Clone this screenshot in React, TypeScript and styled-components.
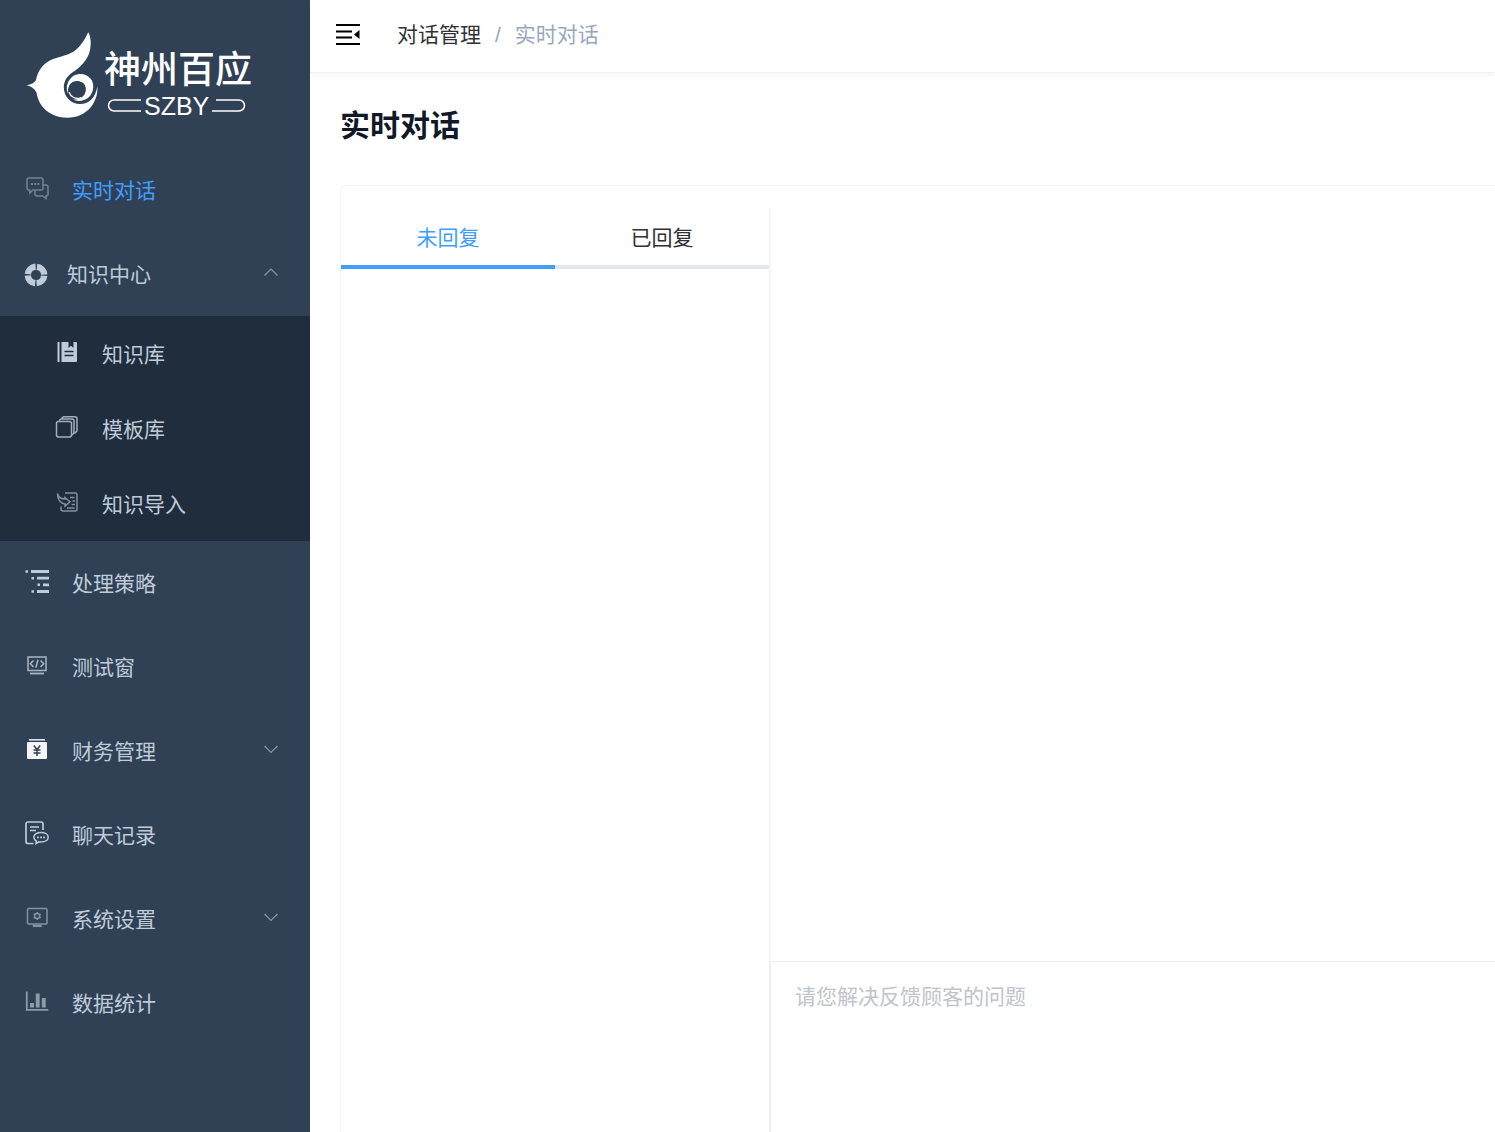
import React from "react";
import styled, { createGlobalStyle, css } from "styled-components";

const GlobalStyle = createGlobalStyle`
  *, *::before, *::after { box-sizing: border-box; }
  body {
    margin: 0;
    background: #fff;
    color: #303133;
    font-family: "Liberation Sans", "Noto Sans CJK SC", sans-serif;
    font-size: 21px;
    line-height: 30px;
  }
  button, textarea { font: inherit; }
`;

const Page = styled.div`
  display: flex;
  min-height: 100vh;
`;

const Sidebar = styled.aside`
  flex: 0 0 310px;
  background: #304156;
  color: #bfcbd9;
`;

const Brand = styled.a`
  display: flex;
  align-items: center;
  gap: 6px;
  height: 148px;
  padding: 0 26px;
  color: #fff;
  text-decoration: none;
`;

const BrandText = styled.span`
  display: flex;
  flex-direction: column;
  gap: 2px;
  padding-top: 20px;
`;

const BrandName = styled.span`
  font-size: 37px;
  font-weight: 500;
  line-height: 42px;
  white-space: nowrap;
`;

const BrandLatin = styled.span`
  display: flex;
  align-items: center;
  gap: 3px;
  padding-left: 3px;
  font-size: 25px;
  line-height: 24px;
`;

const Loop = styled.svg`
  width: 34px;
  height: 16px;
  flex: none;
`;

const MenuList = styled.ul`
  list-style: none;
  margin: 0;
  padding: 0;
`;

const SubMenuList = styled(MenuList)`
  background: #1f2d3d;
`;

const rowStyle = css`
  display: flex;
  align-items: center;
  width: 100%;
  border: 0;
  background: none;
  text-align: left;
  text-decoration: none;
  cursor: pointer;
`;

const MenuLink = styled.a<{ $active?: boolean }>`
  ${rowStyle}
  height: 84px;
  padding: 0 32px 0 25px;
  gap: 23px;
  color: ${(p) => (p.$active ? "#409eff" : "inherit")};
`;

const MenuToggle = styled.button<{ $tight?: boolean }>`
  ${rowStyle}
  height: 84px;
  padding: 0 32px 0 ${(p) => (p.$tight ? 24 : 25)}px;
  gap: ${(p) => (p.$tight ? 19 : 23)}px;
  color: inherit;
`;

const SubMenuLink = styled.a`
  ${rowStyle}
  height: 75px;
  padding: 1px 32px 0 55px;
  gap: 23px;
  color: inherit;
`;

const IconBox = styled.span<{ $color?: string; $level?: boolean }>`
  display: flex;
  flex: none;
  padding: ${(p) => (p.$level ? "2px 0 0" : "0 0 4px")};
  color: ${(p) => p.$color ?? "#bfcbd9"};
`;

const Label = styled.span`
  flex: 1;
  padding-top: 2px;
`;

const Chevron = styled.svg`
  width: 14px;
  height: 14px;
  margin-bottom: 4px;
  color: #8d959f;
`;

const Content = styled.div`
  display: flex;
  flex: 1;
  flex-direction: column;
  min-width: 0;
`;

const TopBar = styled.header`
  display: flex;
  align-items: center;
  gap: 36px;
  height: 73px;
  padding: 0 25px 2px;
  border-bottom: 1px solid #f3f3f4;
  box-shadow: 0 1px 6px rgba(0, 21, 41, 0.06);
`;

const FoldButton = styled.button`
  display: flex;
  padding: 0;
  border: 0;
  background: none;
  color: #000;
  cursor: pointer;
`;

const Crumbs = styled.ol`
  display: flex;
  gap: 14px;
  margin: 0;
  padding: 0;
  list-style: none;
  color: #97a8be;

  a {
    color: #303133;
    text-decoration: none;
  }
`;

const Main = styled.main`
  display: flex;
  flex: 1;
  flex-direction: column;
  padding: 30px 0 0 30px;
`;

const Title = styled.h1`
  margin: 0 0 36px;
  color: #111827;
  font-size: 30px;
  font-weight: 700;
  line-height: 46px;
`;

const Panel = styled.section`
  display: flex;
  flex: 1;
  padding-top: 22px;
  border: solid #f2f3f5;
  border-width: 1px 0 0 1px;
  border-radius: 6px 0 0 0;
`;

const Threads = styled.div`
  flex: 0 0 428px;
`;

const TabBar = styled.div`
  display: flex;
`;

const Tab = styled.button<{ $active?: boolean }>`
  flex: 1;
  height: 61px;
  padding: 2px 0 0;
  border: 0;
  border-bottom: 4px solid ${(p) => (p.$active ? "#409eff" : "#e4e7ed")};
  background: none;
  color: ${(p) => (p.$active ? "#409eff" : "#303133")};
  cursor: pointer;
`;

const Conversation = styled.div`
  display: flex;
  flex: 1;
  flex-direction: column;
  min-width: 0;
`;

const Messages = styled.div`
  flex: 1;
  border-left: 2px solid #f5f5f6;
`;

const Reply = styled.textarea`
  display: block;
  width: 100%;
  height: 171px;
  padding: 20px 24px;
  border: solid #eceef1;
  border-width: 1px 0 0 2px;
  background: #fff;
  color: #303133;
  resize: none;
  outline: none;

  &::placeholder {
    color: #c0c4cc;
    opacity: 1;
  }
`;

type IconProps = { children: React.ReactNode };

const Icon = ({ children }: IconProps) => (
  <svg width="24" height="24" viewBox="0 0 24 24" fill="none" stroke="currentColor" strokeWidth="1.5" aria-hidden="true">
    {children}
  </svg>
);

const ChatIcon = () => (
  <Icon>
    <path d="M4 2h12a2 2 0 0 1 2 2v8a2 2 0 0 1-2 2H8l-3.200 3V14H4a2 2 0 0 1-2-2V4a2 2 0 0 1 2-2z" />
    <path d="M18 9h3a2 2 0 0 1 2 2v7a2 2 0 0 1-2 2v2.500L17.500 20H12a2 2 0 0 1-2-2v-4" />
    <path d="M6 8h2M9.200 8h2M12.400 8h2" strokeWidth="2" />
  </Icon>
);

const RingIcon = () => (
  <Icon>
    <circle cx="12" cy="12" r="8.200" strokeWidth="6.400" strokeDasharray="11.500 1.380" strokeDashoffset="-0.690" />
  </Icon>
);

const BookIcon = () => (
  <Icon>
    <path d="M2.500 2h2v20h-2zM6.500 2h7v6l2.500-2.200L18.500 8V2H21a1 1 0 0 1 1 1v18a1 1 0 0 1-1 1H6.500z" fill="currentColor" stroke="none" />
    <path d="M9.500 11.500h9M9.500 15.500h9" stroke="#1f2d3d" />
  </Icon>
);

const StackIcon = () => (
  <Icon>
    <rect x="1.500" y="6.500" width="15" height="15.500" rx="2" />
    <path d="M4 5.500 6 4h11a2 2 0 0 1 2 2v12l-2 2M6.500 3.500 8.500 1.800H20a2 2 0 0 1 2 2V16l-2.500 2.500" />
  </Icon>
);

const ImportIcon = () => (
  <Icon>
    <path d="M10 3h10a2 2 0 0 1 2 2v14a2 2 0 0 1-2 2H8a2 2 0 0 1-2-2v-2.500" />
    <path d="M2.500 3.500c.8 3.800 3.500 5.500 7.500 5.500V7.500l5 4.200-5 4.300v-2C5.500 13.500 2.500 9.500 2.500 3.500z" />
    <path d="M15 7.500h4.500M17.500 11h2.500M16.500 14.500H20M12 18h7.500" strokeWidth="1.400" />
  </Icon>
);

const TreeIcon = () => (
  <Icon>
    <path d="M6 2.500h18M12 9.200h12M18 15.800h6M12 22.500h12" strokeWidth="2.800" />
    <path d="M.5 2.500h2.500M6.500 9.200H9M12.500 15.800H15M6.500 22.500H9" strokeWidth="2.500" />
  </Icon>
);

const CodeIcon = () => (
  <Icon>
    <rect x="3" y="4" width="18" height="13.500" strokeWidth="1.500" />
    <path d="m8.500 7.500-3.200 3.200 3.200 3.200M15.500 7.500l3.200 3.200-3.200 3.200M13 6.800l-2.200 8" strokeWidth="1.500" />
    <path d="M5 20.500h14" strokeWidth="1.800" />
  </Icon>
);

const MoneyIcon = () => (
  <Icon>
    <path d="M4 2.800h16" stroke="#dfe4ea" strokeWidth="1.600" />
    <rect x="2" y="5" width="20" height="17" rx="1" fill="currentColor" stroke="none" />
    <path d="m8.800 8.500 3.200 4 3.200-4M12 12.500v6.500M8.500 13h7M8.500 16h7" stroke="#304156" strokeWidth="1.500" />
  </Icon>
);

const RecordIcon = () => (
  <Icon>
    <path d="M8.500 22.500H3a2 2 0 0 1-2-2V3a2 2 0 0 1 2-2h13a2 2 0 0 1 2 2v6M5 6h9M5 9.500h6" strokeWidth="1.700" />
    <path d="M16 11.500c4.200 0 7.200 2 7.200 4.800s-3 4.700-7.200 4.700c-1 0-1.500 0-2.200-.2L11 22.500l.3-2.700c-1.600-.9-2.500-2-2.500-3.500 0-2.800 3-4.800 7.200-4.800z" />
    <path d="M12 16.300h1.800M15.100 16.300h1.800M18.200 16.300H20" strokeWidth="1.700" />
  </Icon>
);

const SettingsIcon = () => (
  <Icon>
    <rect x="2.500" y="3.500" width="19.500" height="15.500" rx="1" />
    <circle cx="12.200" cy="11" r="2.500" strokeWidth="1.400" />
    <path d="M12.200 7v1.500M12.200 13.500V15M8.700 9l1.400.8M14.300 12.200l1.400.8M8.700 13l1.400-.8M14.300 9.800l1.400-.8" />
    <path d="M8.500 20.500h7.500v.8h-7.500z" fill="currentColor" />
  </Icon>
);

const ChartIcon = () => (
  <Icon>
    <path d="M1.800 2.500v18.300h21.500" strokeWidth="1.800" />
    <path d="M7 14v4.500M12.700 4.500v14M18.800 9v9.500" strokeWidth="3.900" />
  </Icon>
);

const FoldIcon = () => (
  <svg width="26" height="24" viewBox="0 0 26 24" fill="none" stroke="currentColor" strokeWidth="2" aria-hidden="true">
    <path d="M1 2h24M1 8.500h16M1 14.500h16M1 21h24" />
    <path d="m19 11.500 5.500-4.500v9z" fill="currentColor" stroke="none" />
  </svg>
);

const Flame = () => (
  <svg width="72" height="88" viewBox="0 0 72 88" aria-hidden="true">
    <path
      d="M62.300 2.300C65.500 8 65.500 18 62.500 25C59.500 32 53 38 47 42C41 46 38 51 37.800 57C37.800 67 45 74 54 74C63 74 69.500 68 71.300 56.500C72 64 69.500 71 65 77C59 84 51 87.700 41 87.700C26 87.700 12.500 78 10.500 62.500C8.500 58.500 5 56.500 0.700 55.300C5 54.500 8.500 53 10 50C12 39 19 32 27.300 29C33 26.500 41 25.500 47.300 21.700C54 17.500 58.500 10 62.300 2.300Z"
      fill="#fff"
    />
    <path
      d="M42 64C39 57 42 49 48 45.500C54 42.500 61 44 65 49C69 55 67.500 63 62.500 67.500C58 71 52 72 47 69.500C51 70 56 68.500 58.500 64.500C61 60 60 55 56.500 52.500C52 49.500 46 51 43.500 55C42 58 41.500 61 42 64Z"
      fill="#fff"
    />
    <path d="M43 62C44.500 67 50 70 55 67.500" fill="none" stroke="#fff" strokeWidth="1.200" />
  </svg>
);

const ChevronIcon = ({ open }: { open?: boolean }) => (
  <Chevron viewBox="0 0 14 14" fill="none" stroke="currentColor" strokeWidth="1.200" aria-hidden="true">
    <path d={open ? "M.5 10.500 7 4l6.500 6.500" : "M.5 4 7 10.500 13.500 4"} />
  </Chevron>
);

export default function App() {
  return (
    <>
      <GlobalStyle />
      <Page>
        <Sidebar>
          <Brand href="#">
            <Flame />
            <BrandText>
              <BrandName>神州百应</BrandName>
              <BrandLatin>
                <Loop viewBox="0 0 34 16" fill="none" stroke="#fff" strokeWidth="1.500">
                  <path d="M34 2H7a5.500 5.500 0 0 0 0 11h27" />
                </Loop>
                <span>SZBY</span>
                <Loop viewBox="0 0 34 16" fill="none" stroke="#fff" strokeWidth="1.500">
                  <path d="M4 2h23a5.500 5.500 0 0 1 0 11H0" />
                </Loop>
              </BrandLatin>
            </BrandText>
          </Brand>
          <nav>
            <MenuList>
              <li>
                <MenuLink href="#chat" $active>
                  <IconBox $color="#75818f"><ChatIcon /></IconBox>
                  <Label>实时对话</Label>
                </MenuLink>
              </li>
              <li>
                <MenuToggle type="button" $tight aria-expanded="true">
                  <IconBox $level><RingIcon /></IconBox>
                  <Label>知识中心</Label>
                  <ChevronIcon open />
                </MenuToggle>
                <SubMenuList>
                  <li>
                    <SubMenuLink href="#library">
                      <IconBox><BookIcon /></IconBox>
                      <Label>知识库</Label>
                    </SubMenuLink>
                  </li>
                  <li>
                    <SubMenuLink href="#templates">
                      <IconBox $color="#a3afbc"><StackIcon /></IconBox>
                      <Label>模板库</Label>
                    </SubMenuLink>
                  </li>
                  <li>
                    <SubMenuLink href="#import">
                      <IconBox $color="#84919d"><ImportIcon /></IconBox>
                      <Label>知识导入</Label>
                    </SubMenuLink>
                  </li>
                </SubMenuList>
              </li>
              <li>
                <MenuLink href="#strategy">
                  <IconBox><TreeIcon /></IconBox>
                  <Label>处理策略</Label>
                </MenuLink>
              </li>
              <li>
                <MenuLink href="#test">
                  <IconBox $color="#a9b5c2"><CodeIcon /></IconBox>
                  <Label>测试窗</Label>
                </MenuLink>
              </li>
              <li>
                <MenuToggle type="button" aria-expanded="false">
                  <IconBox $color="#f4f5f6"><MoneyIcon /></IconBox>
                  <Label>财务管理</Label>
                  <ChevronIcon />
                </MenuToggle>
              </li>
              <li>
                <MenuLink href="#records">
                  <IconBox><RecordIcon /></IconBox>
                  <Label>聊天记录</Label>
                </MenuLink>
              </li>
              <li>
                <MenuToggle type="button" aria-expanded="false">
                  <IconBox $color="#84929f"><SettingsIcon /></IconBox>
                  <Label>系统设置</Label>
                  <ChevronIcon />
                </MenuToggle>
              </li>
              <li>
                <MenuLink href="#stats">
                  <IconBox $color="#8b9ba8"><ChartIcon /></IconBox>
                  <Label>数据统计</Label>
                </MenuLink>
              </li>
            </MenuList>
          </nav>
        </Sidebar>
        <Content>
          <TopBar>
            <FoldButton type="button" aria-label="折叠菜单">
              <FoldIcon />
            </FoldButton>
            <nav>
              <Crumbs>
                <li><a href="#manage">对话管理</a></li>
                <li aria-hidden="true">/</li>
                <li aria-current="page">实时对话</li>
              </Crumbs>
            </nav>
          </TopBar>
          <Main>
            <Title>实时对话</Title>
            <Panel>
              <Threads>
                <TabBar role="tablist">
                  <Tab type="button" role="tab" aria-selected="true" $active>未回复</Tab>
                  <Tab type="button" role="tab" aria-selected="false">已回复</Tab>
                </TabBar>
              </Threads>
              <Conversation>
                <Messages />
                <Reply aria-label="回复内容" placeholder="请您解决反馈顾客的问题" />
              </Conversation>
            </Panel>
          </Main>
        </Content>
      </Page>
    </>
  );
}
